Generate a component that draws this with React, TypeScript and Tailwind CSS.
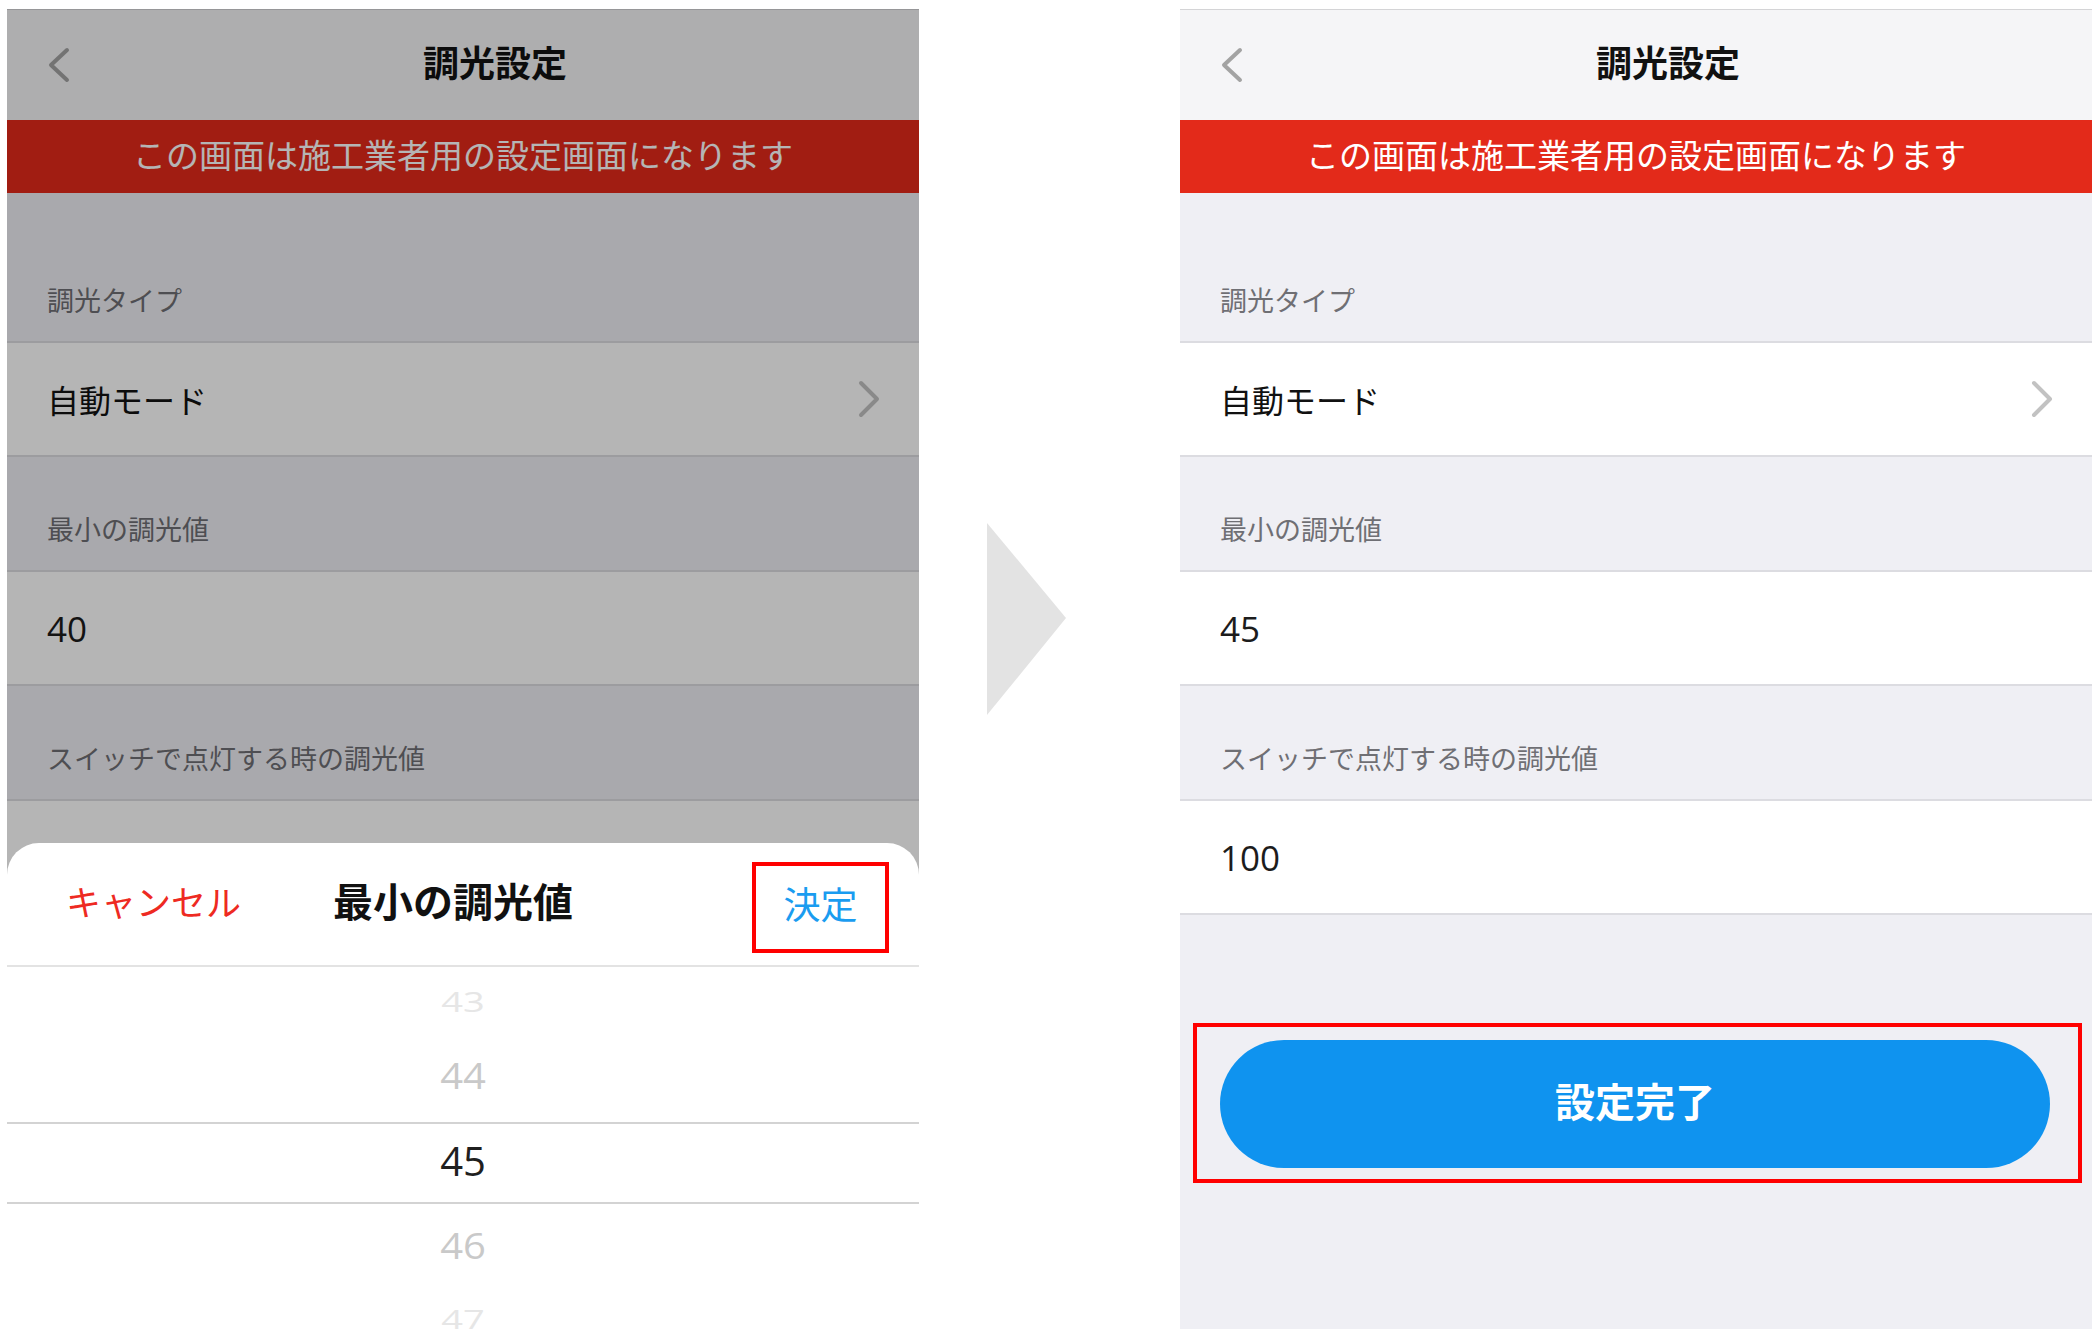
import React from "react";

const jp = { fontFamily: '"Noto Sans CJK JP", "Noto Sans", sans-serif' };
const num = { fontFamily: '"Open Sans", "Noto Sans CJK JP", sans-serif' };

function BackIcon() {
  return (
    <svg width="26" height="36" viewBox="0 0 26 36" fill="none">
      <polyline points="20,3 4,18 20,33" stroke="#a3a3a3" strokeWidth="4" strokeLinecap="round" strokeLinejoin="round" />
    </svg>
  );
}

function ChevronRight() {
  return (
    <svg width="24" height="38" viewBox="0 0 24 38" fill="none">
      <polyline points="4,3 20,19 4,35" stroke="#c2c2c2" strokeWidth="4" strokeLinecap="round" strokeLinejoin="round" />
    </svg>
  );
}

function SectionHeader({ label, first }: { label: string; first?: boolean }) {
  return (
    <div
      className={`flex items-end border-b-2 border-[#dcdce1] bg-[#efeff4] pl-[40px] pb-[26px] ${first ? "h-[150px]" : "h-[115px]"}`}
    >
      <span className="text-[27px] leading-[30px] text-[#6f6f74]" style={jp}>
        {label}
      </span>
    </div>
  );
}

function ValueRow({ children, chevron }: { children: React.ReactNode; chevron?: boolean }) {
  return (
    <div className="flex h-[114px] items-center justify-between border-b-2 border-[#dcdce1] bg-white pl-[40px] pr-[38px]">
      {children}
      {chevron && <ChevronRight />}
    </div>
  );
}

function Screen({ minValue }: { minValue: string }) {
  return (
    <div className="flex h-full flex-col bg-[#efeff4]">
      {/* nav */}
      <div className="flex h-[111px] items-center border-t border-[#d4d4d6] bg-[#f5f5f7] pl-[40px]">
        <BackIcon />
        <div className="mb-[8px] flex flex-1 justify-center pl-[24px]">
          <span className="text-[36px] font-bold leading-none text-[#111]" style={jp}>
            調光設定
          </span>
        </div>
        <div className="w-[26px]" />
      </div>

      {/* warning banner */}
      <div className="flex h-[73px] items-center justify-center bg-[#e32a1a] pb-[4px]">
        <span className="text-[33px] leading-none text-white" style={jp}>
          この画面は施工業者用の設定画面になります
        </span>
      </div>

      <SectionHeader label="調光タイプ" first />
      <ValueRow chevron>
        <span className="text-[32px] leading-none text-[#111]" style={jp}>
          自動モード
        </span>
      </ValueRow>

      <SectionHeader label="最小の調光値" />
      <ValueRow>
        <span className="text-[35px] leading-none text-[#1c1c1c]" style={num}>
          {minValue}
        </span>
      </ValueRow>

      <SectionHeader label="スイッチで点灯する時の調光値" />
      <ValueRow>
        <span className="text-[35px] leading-none text-[#1c1c1c]" style={num}>
          100
        </span>
      </ValueRow>
    </div>
  );
}

function PickerSheet() {
  return (
    <div className="absolute inset-x-0 bottom-0 top-[834px] flex flex-col overflow-hidden rounded-t-[32px] bg-white">
      <div className="flex h-[124px] shrink-0 items-center border-b-2 border-[#e3e3e3] pb-[8px]">
        <span className="ml-[59px] text-[35px] leading-none text-[#ee2a22]" style={jp}>
          キャンセル
        </span>
        <span className="ml-[92px] text-[40px] font-bold leading-none text-[#111]" style={jp}>
          最小の調光値
        </span>
        <div className="flex-1" />
        <div className="mr-[30px] mt-[15px] flex h-[91px] w-[137px] items-center justify-center border-4 border-[#ff0000] pb-[8px]">
          <span className="text-[37px] leading-none text-[#1a9cf0]" style={jp}>
            決定
          </span>
        </div>
      </div>

      <div className="flex flex-col" style={num}>
        <div className="flex h-[72px] items-center justify-center pb-[4px]">
          <span className="scale-y-[0.7] text-[38px] leading-none text-[#e6e6e6]">43</span>
        </div>
        <div className="flex h-[76px] items-center justify-center pb-[4px]">
          <span className="scale-y-90 text-[40px] leading-none text-[#c9c9c9]">44</span>
        </div>
        <div className="h-[7px]" />
        <div className="flex h-[82px] items-center justify-center border-y-2 border-[#d3d3d3] pb-[4px]">
          <span className="text-[40px] leading-none text-[#1f1f1f]">45</span>
        </div>
        <div className="flex h-[86px] items-center justify-center pb-[4px]">
          <span className="scale-y-90 text-[40px] leading-none text-[#c9c9c9]">46</span>
        </div>
        <div className="flex h-[60px] items-center justify-center">
          <span className="scale-y-[0.7] text-[38px] leading-none text-[#e6e6e6]">47</span>
        </div>
      </div>
    </div>
  );
}

export default function App() {
  return (
    <div className="flex h-[1329px] w-[2097px] overflow-hidden bg-white pt-[9px]">
      {/* before: picker open */}
      <div className="relative ml-[7px] w-[912px] shrink-0">
        <Screen minValue="40" />
        <div className="absolute inset-0 bg-black/[0.29]" />
        <PickerSheet />
      </div>

      {/* arrow */}
      <div className="w-[261px] shrink-0 pl-[68px] pt-[514px]">
        <svg width="80" height="193" viewBox="0 0 80 193">
          <polygon points="0,0 79,95 0,192" fill="#e3e3e3" />
        </svg>
      </div>

      {/* after: values saved */}
      <div className="flex w-[912px] shrink-0 flex-col bg-[#efeff4]">
        <div className="h-[906px] shrink-0">
          <Screen minValue="45" />
        </div>
        <div className="ml-[13px] mr-[10px] mt-[108px] border-4 border-[#ff0000] pb-[11px] pl-[23px] pr-[28px] pt-[13px]">
          <button className="flex h-[128px] w-full items-center justify-center rounded-full bg-[#0f93ef] pb-[8px]">
            <span className="text-[40px] font-bold leading-none text-white" style={jp}>
              設定完了
            </span>
          </button>
        </div>
      </div>
    </div>
  );
}
